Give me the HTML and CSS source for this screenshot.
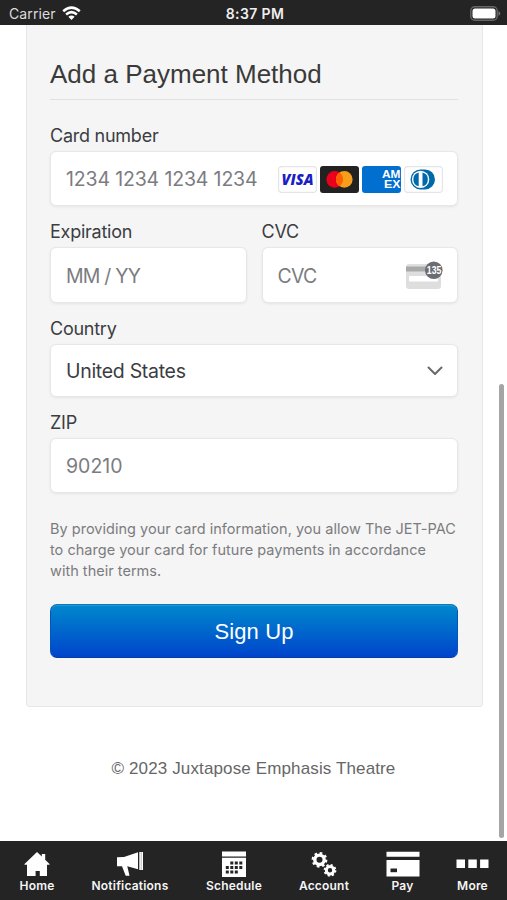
FILE: index.html
```html
<!DOCTYPE html>
<html lang="en">
<head>
<meta charset="utf-8">
<title>Add a Payment Method</title>
<link rel="stylesheet" href="styles.css">
</head>
<body>
<header class="status">
  <div class="carrier"><span>Carrier</span>
    <svg width="19" height="15" viewBox="0 0 19 15" fill="none" stroke="#fff" stroke-width="2.5"><path d="M1.2 5.2Q9.5-2 17.8 5.2M4.1 8.5Q9.5 3.8 14.9 8.5"/><path d="M6.4 10.8Q9.5 8 12.6 10.8L9.5 14Z" fill="#fff" stroke="none"/></svg>
  </div>
  <div class="clock">8:37 PM</div>
  <svg class="battery" width="31" height="15" viewBox="0 0 31 15"><rect x=".8" y=".8" width="26.4" height="13.4" rx="4" fill="#222" stroke="#666" stroke-width="1.4"/><rect x="2.5" y="2.5" width="23" height="10" rx="2.5" fill="#fff"/><path d="M28.5 5Q32 7.5 28.5 10Z" fill="#777"/></svg>
</header>
<main class="page">
  <form class="panel">
    <h1 class="title"><span>Add a Payment Method</span></h1>
    <div class="label label-first">Card number</div>
    <div class="field">
      <span class="hint hint-number">1234 1234 1234 1234</span>
      <div class="brands">
        <svg width="39" height="27" viewBox="0 0 39 27"><rect x=".6" y=".6" width="37.8" height="25.8" rx="3.2" fill="#fff" stroke="#e5e5e5" stroke-width="1.2"/><text x="3.5" y="18.8" class="visa" textLength="32" lengthAdjust="spacingAndGlyphs">VISA</text></svg>
        <svg width="39" height="27" viewBox="0 0 39 27"><rect width="39" height="27" rx="3" fill="#222"/><circle cx="14.7" cy="13.4" r="8.3" fill="#eb001b"/><circle cx="24.3" cy="13.4" r="8.3" fill="#f79e1b"/><path d="M19.5 6.6a8.3 8.3 0 0 1 0 13.6a8.3 8.3 0 0 1 0-13.6" fill="#ff5f00"/></svg>
        <svg width="39" height="27" viewBox="0 0 39 27"><rect width="39" height="27" rx="3" fill="#016fd0"/><text x="20" y="12.2" class="amex" textLength="18.5" lengthAdjust="spacingAndGlyphs">AM</text><text x="22" y="22" class="amex" textLength="16.5" lengthAdjust="spacingAndGlyphs">EX</text></svg>
        <svg width="39" height="27" viewBox="0 0 39 27"><rect x=".6" y=".6" width="37.8" height="25.8" rx="3.2" fill="#fff" stroke="#e5e5e5" stroke-width="1.2"/><path d="M16.5 3.4H21a10 10 0 0 1 0 20h-4.5a10 10 0 0 1 0-20" fill="#0069aa"/><circle cx="16.6" cy="13.4" r="8.7" fill="#fff"/><path d="M14.7 6.6v13.6a7 7 0 0 1 0-13.6M18.5 6.6v13.6a7 7 0 0 0 0-13.6" fill="#0069aa"/></svg>
      </div>
    </div>
    <div class="pair">
      <div>
        <div class="label">Expiration</div>
        <div class="field"><span class="hint hint-date">MM / YY</span></div>
      </div>
      <div>
        <div class="label">CVC</div>
        <div class="field"><span class="hint hint-cvc">CVC</span>
          <svg width="38" height="29" viewBox="0 0 38 29"><rect x="1" y="3" width="35" height="25" rx="3" fill="#dedede"/><path d="M1 5.5h35v5H1z" fill="#a9a9ab"/><rect x="4" y="15" width="29" height="5.5" rx="1" fill="#fff"/><circle cx="28.8" cy="9.2" r="8.8" fill="#6b6d72"/><text x="21.8" y="12.8" class="digits" textLength="14.5" lengthAdjust="spacingAndGlyphs">135</text></svg>
        </div>
      </div>
    </div>
    <div class="label">Country</div>
    <div class="field field-select"><span class="value">United States</span>
      <svg width="16" height="10" viewBox="0 0 16 10" fill="none" stroke="#696a70" stroke-width="2" stroke-linecap="round" stroke-linejoin="round"><path d="M1.5 1.5L8 8l6.5-6.5"/></svg>
    </div>
    <div class="label">ZIP</div>
    <div class="field"><span class="hint hint-zip">90210</span></div>
    <p class="terms">By providing your card information, you allow The JET-PAC<br>to charge your card for future payments in accordance<br>with their terms.</p>
    <button class="submit" type="button"><span>Sign Up</span></button>
  </form>
  <footer class="copyright">© 2023 Juxtapose Emphasis Theatre</footer>
</main>
<div class="scrollbar"></div>
<nav class="tabs">
  <a class="tab"><svg width="26" height="26" viewBox="0 0 26 26" fill="#fff"><path d="M13 1l4.8 4.6V3h3.4v5.8L25.5 13v.7H23V25h-7.2v-5h-4.2v5H3V13.7H.5V13z"/></svg><span>Home</span></a>
  <a class="tab"><svg width="28" height="26" viewBox="0 0 28 26" fill="#fff"><path d="M1 6.3L8 6 22 1.3v17L11.3 15.2l2.2 9.5h-3.8L6 15.2H1zM23.3 1H27v18h-3.7z"/><path d="M25.2 1v18" stroke="#888" stroke-width=".6"/></svg><span>Notifications</span></a>
  <a class="tab"><svg width="24" height="26" viewBox="0 0 24 26"><path fill="#fff" d="M0 .5h24v5H0zM0 6.7h24V26H0z"/><g fill="#242424"><path d="M8.3 10.5h3v3h-3zM12.8 10.5h3v3h-3zM17.3 10.5h3v3h-3zM3.8 15h3v3h-3zM8.3 15h3v3h-3zM12.8 15h3v3h-3zM17.3 15h3v3h-3zM3.8 19.5h3v3h-3zM8.3 19.5h3v3h-3zM12.8 19.5h3v3h-3z"/></g></svg><span>Schedule</span></a>
  <a class="tab"><svg width="26" height="26" viewBox="0 0 26 26" fill="none" stroke="#fff"><circle cx="8.5" cy="8.8" r="4.7" stroke-width="3.4"/><circle cx="8.5" cy="8.8" r="6.8" stroke-width="2.2" stroke-dasharray="2.67 2.67"/><circle cx="19" cy="19.3" r="3.7" stroke-width="3"/><circle cx="19" cy="19.3" r="5.5" stroke-width="1.8" stroke-dasharray="2.16 2.16"/></svg><span>Account</span></a>
  <a class="tab"><svg width="34" height="26" viewBox="0 0 34 26"><path fill="#fff" d="M.5.7h33v5H.5zM.5 9h33v16.5H.5z"/><path fill="#242424" d="M4.5 17.5h6.5v3.7H4.5z"/></svg><span>Pay</span></a>
  <a class="tab"><svg width="34" height="26" viewBox="0 0 34 26" fill="#fff"><path d="M.5 8.5H9V17H.5zM12.3 8.5h8.5V17h-8.5zM24.1 8.5h8.4V17h-8.4z"/></svg><span>More</span></a>
</nav>
</body>
</html>
```
FILE: styles.css
```css
* { box-sizing: border-box; }
body {
  margin: 0;
  height: 900px;
  overflow: hidden;
  display: flex;
  flex-direction: column;
  background: #fff;
  color: #3b3d42;
  font-family: Inter, "Liberation Sans", sans-serif;
}
.status {
  height: 25px;
  flex: none;
  display: grid;
  grid-template-columns: 1fr 1fr 1fr;
  align-items: center;
  padding: 1px 6px 0 9px;
  background: #242424;
  color: #fff;
}
.carrier { display: flex; align-items: center; gap: 6px; font-size: 14px; letter-spacing: .1px; color: #ddd; }
.clock { text-align: center; font-size: 14px; font-weight: 600; letter-spacing: .4px; color: #eee; }
.battery { justify-self: end; }
.page { flex: 1; min-height: 0; }
.panel {
  width: 457px;
  height: 682px;
  margin-left: 25.5px;
  padding: 24px 23.5px 0;
  background: #f5f5f5;
  border: solid #e7e7e7;
  border-width: 0 1.5px 1.5px;
  border-radius: 0 0 4px 4px;
}
.title {
  height: 51px;
  margin: 0;
  border-bottom: 1px solid #e1e1e1;
  font: 400 26px/50px "Liberation Sans", sans-serif;
  color: #3a3a3a;
  white-space: nowrap;
}
.label {
  height: 41px;
  padding-top: 10px;
  font-size: 18px;
  line-height: 32px;
  letter-spacing: -.25px;
  white-space: nowrap;
}
.label-first { height: 50.5px; padding-top: 20px; }
.field {
  height: 55.5px;
  display: flex;
  align-items: center;
  justify-content: space-between;
  padding: 1.5px 14.5px 0 15px;
  background: #fff;
  border: 1px solid #e7e7e7;
  border-radius: 6px;
  box-shadow: 0 1px 3px rgba(0, 0, 0, .07);
  font-size: 19.5px;
  white-space: nowrap;
}
.field-select { height: 53px; }
.hint { color: #7b7c80; }
.hint-number { letter-spacing: -.15px; }
.hint-date { letter-spacing: -.8px; }
.hint-cvc { letter-spacing: -.8px; }
.hint-zip { letter-spacing: 0; }
.value { letter-spacing: -.3px; }
.brands { display: flex; gap: 3px; }
.visa { font: italic 800 15px "Open Sans", sans-serif; fill: #1a1fc4; }
.amex { font: 700 10.5px "Liberation Sans", sans-serif; fill: #fff; }
.digits { font: 700 10px "Liberation Sans", sans-serif; fill: #fff; }
.pair { display: grid; grid-template-columns: 1fr 1fr; gap: 15px; }
.terms {
  margin: 24.5px 0 0;
  font-size: 14.5px;
  line-height: 21px;
  letter-spacing: .02px;
  color: #7b7c80;
  white-space: nowrap;
}
.submit {
  display: block;
  width: 100%;
  height: 54px;
  margin-top: 23.5px;
  padding: 2px 0 0;
  border: 1px solid;
  border-color: #0a78bd #0554bd #053da8;
  border-radius: 7px;
  background: linear-gradient(#0088cc, #0044cc);
  box-shadow: inset 0 1px 0 rgba(255, 255, 255, .15);
  color: #fff;
  font: 22px "Liberation Sans", sans-serif;
  letter-spacing: .1px;
}
.copyright {
  padding-top: 52px;
  text-align: center;
  font: 17px/20px "Liberation Sans", sans-serif;
  letter-spacing: .13px;
  color: #666;
}
.scrollbar { position: absolute; left: 499px; top: 384px; width: 5px; height: 454px; border-radius: 3px; background: #a5a5a5; }
.tabs {
  height: 59px;
  flex: none;
  display: grid;
  grid-template-columns: 74px 112px 96px 84px 73px 67px;
  padding-top: 9.5px;
  background: #242424;
  color: #f5f5f5;
}
.tab {
  display: flex;
  flex-direction: column;
  align-items: center;
  font-size: 12px;
  font-weight: 600;
  line-height: 18px;
  letter-spacing: .2px;
  white-space: nowrap;
}
```
